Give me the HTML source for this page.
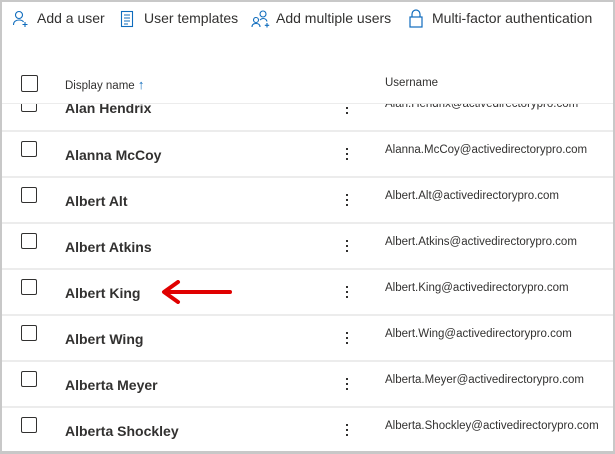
<!DOCTYPE html>
<html><head><style>
body{margin:0;width:615px;height:453px;overflow:hidden;background:#fff;font-family:"Liberation Sans",sans-serif;position:relative}
div{white-space:nowrap}
.frame{position:absolute;left:0;top:0;width:611px;height:449px;border:2px solid #c8c8c8;border-bottom-width:3px}
.a{position:absolute;white-space:nowrap}
.r{position:absolute;left:0;width:615px;height:44px}
.tb{top:10px;font-size:14px;color:#323130}
.cb{position:absolute;left:21px;width:14px;height:14px;border:1px solid #323130;border-radius:2px;background:#fff}
.nm{position:absolute;left:65px;font-size:14px;font-weight:bold;color:#323130}
.un{position:absolute;left:385px;font-size:11.5px;color:#323130}
.dots{position:absolute;left:346px;width:2px}
.dots i{display:block;width:2px;height:2px;background:#323130;margin-bottom:3px}
.sep{position:absolute;left:2px;width:611px;height:2px;background:#ececec}
</style></head><body>
<div class="frame"></div>
<svg class="a" style="left:12px;top:10px" width="18" height="18" viewBox="0 0 18 18" fill="none" stroke="#0f6cbd" stroke-width="1.1"><circle cx="7" cy="5" r="3.5"/><path d="M1.5 15c0-3.5 2.5-5 5.5-5s4 1 4.5 2"/><path d="M13 12v5M10.5 14.5h5"/></svg>
<div class="a tb" style="left:37px">Add a user</div>
<svg class="a" style="left:120px;top:10px" width="14" height="18" viewBox="0 0 14 18" fill="none" stroke="#0f6cbd" stroke-width="1.1"><rect x="1.5" y="1.5" width="11" height="15"/><path d="M4 5h6M4 8h6M4 11h6M4 14h4"/></svg>
<div class="a tb" style="left:144px">User templates</div>
<svg class="a" style="left:251px;top:10px" width="20" height="18" viewBox="0 0 20 18" fill="none" stroke="#0f6cbd" stroke-width="1.1"><circle cx="12" cy="4" r="3"/><circle cx="5" cy="10" r="2.5"/><path d="M1 17c0-2.5 1.5-3.5 4-3.5s4 1 4 3.5"/><path d="M9 10c1-1 2-1.5 3-1.5 2 0 3.5 1 4 3"/><path d="M16 13v4.5M13.8 15.3h4.4"/></svg>
<div class="a tb" style="left:276px">Add multiple users</div>
<svg class="a" style="left:408px;top:9px" width="16" height="20" viewBox="0 0 16 20" fill="none" stroke="#0f6cbd" stroke-width="1.2"><path d="M4 8V5a4 4 0 0 1 8 0v3"/><rect x="2" y="8" width="12" height="10"/></svg>
<div class="a tb" style="left:432px">Multi-factor authentication</div>

<div class="cb" style="top:75px;width:15px;height:15px"></div>
<div class="a" style="left:65px;top:77px;font-size:11.5px;color:#323130">Display name <span style="color:#0f6cbd;font-size:13px">↑</span></div>
<div class="a" style="left:385px;top:77px;font-size:11.5px;color:#323130">Username</div>
<div class="sep" style="top:103px;height:1px"></div>

<div style="position:absolute;left:0;top:104px;width:615px;height:27px;overflow:hidden">
<div class="cb" style="top:-8px"></div>
<div class="nm" style="top:-4px">Alan Hendrix</div>
<div class="dots" style="top:3px"><i></i><i></i></div>
<div class="un" style="top:-6px">Alan.Hendrix@activedirectorypro.com</div>
</div>
<div class="sep" style="top:130px"></div>

<div class="r" style="top:132px">
<div class="cb" style="top:9px"></div><div class="nm" style="top:15px">Alanna McCoy</div><div class="dots" style="top:16px"><i></i><i></i><i></i></div><div class="un" style="top:12px">Alanna.McCoy@activedirectorypro.com</div>
</div>
<div class="sep" style="top:176px"></div>
<div class="r" style="top:178px">
<div class="cb" style="top:9px"></div><div class="nm" style="top:15px">Albert Alt</div><div class="dots" style="top:16px"><i></i><i></i><i></i></div><div class="un" style="top:12px">Albert.Alt@activedirectorypro.com</div>
</div>
<div class="sep" style="top:222px"></div>
<div class="r" style="top:224px">
<div class="cb" style="top:9px"></div><div class="nm" style="top:15px">Albert Atkins</div><div class="dots" style="top:16px"><i></i><i></i><i></i></div><div class="un" style="top:12px">Albert.Atkins@activedirectorypro.com</div>
</div>
<div class="sep" style="top:268px"></div>
<div class="r" style="top:270px">
<div class="cb" style="top:9px"></div><div class="nm" style="top:15px">Albert King</div><div class="dots" style="top:16px"><i></i><i></i><i></i></div><div class="un" style="top:12px">Albert.King@activedirectorypro.com</div>
</div>
<svg class="a" style="left:160px;top:280px" width="74" height="24" viewBox="0 0 74 24"><path d="M70 12H6" stroke="#e00000" stroke-width="4" stroke-linecap="round"/><path d="M18 2L4 12l14 10" fill="none" stroke="#e00000" stroke-width="4" stroke-linecap="round" stroke-linejoin="round"/></svg>
<div class="sep" style="top:314px"></div>
<div class="r" style="top:316px">
<div class="cb" style="top:9px"></div><div class="nm" style="top:15px">Albert Wing</div><div class="dots" style="top:16px"><i></i><i></i><i></i></div><div class="un" style="top:12px">Albert.Wing@activedirectorypro.com</div>
</div>
<div class="sep" style="top:360px"></div>
<div class="r" style="top:362px">
<div class="cb" style="top:9px"></div><div class="nm" style="top:15px">Alberta Meyer</div><div class="dots" style="top:16px"><i></i><i></i><i></i></div><div class="un" style="top:12px">Alberta.Meyer@activedirectorypro.com</div>
</div>
<div class="sep" style="top:406px"></div>
<div class="r" style="top:408px">
<div class="cb" style="top:9px"></div><div class="nm" style="top:15px">Alberta Shockley</div><div class="dots" style="top:16px"><i></i><i></i><i></i></div><div class="un" style="top:12px">Alberta.Shockley@activedirectorypro.com</div>
</div>
</body></html>
